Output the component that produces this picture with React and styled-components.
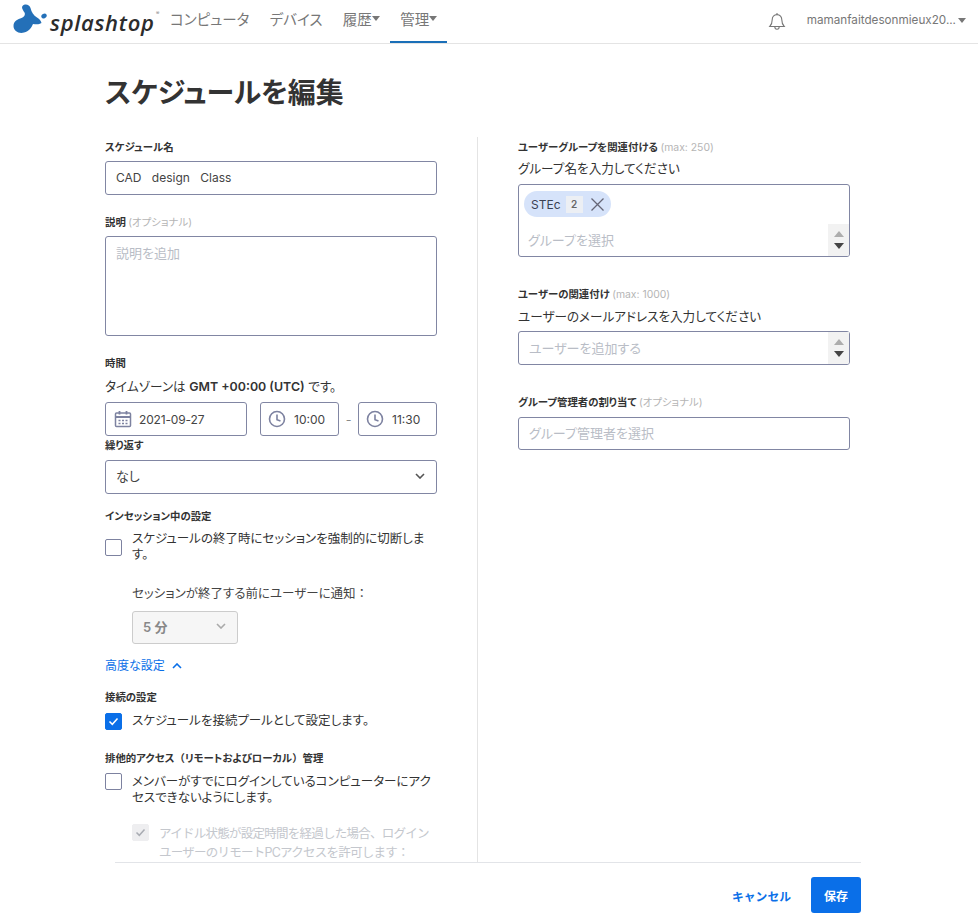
import React from 'react';
import styled, { createGlobalStyle } from 'styled-components';

const GlobalStyle = createGlobalStyle`
  html, body, #root { height: 100%; margin: 0; }
  body {
    background: #fff;
    color: #333;
    font-family: Inter, "Noto Sans CJK JP", sans-serif;
    font-size: 12.5px;
    font-feature-settings: "palt";
    overflow: hidden;
  }
  * { box-sizing: border-box; }
`;

const Page = styled.div`
  height: 917px;
  display: flex;
  flex-direction: column;
`;

const Header = styled.header`
  height: 44px;
  flex: none;
  display: flex;
  align-items: stretch;
  border-bottom: 1px solid #e4e4e4;
  padding-left: 13px;
`;

const Logo = styled.div`
  display: flex;
  align-items: center;
  width: 147px;
  flex: none;
  position: relative;
  svg { margin-bottom: 5px; }
`;

const Wordmark = styled.span`
  font-family: "Open Sans", sans-serif;
  font-style: italic;
  font-weight: 600;
  font-size: 22px;
  letter-spacing: 0.7px;
  color: #2c2c2c;
  margin-left: 3px;
  margin-top: 1px;
`;

const Reg = styled.span`
  position: absolute;
  left: 143px;
  top: 10px;
  font-size: 5px;
  color: #777;
`;

const Nav = styled.nav`
  display: flex;
  align-items: stretch;
  gap: 0.4px;
`;

const NavItem = styled.a`
  display: flex;
  align-items: center;
  padding: 0 10px 5px;
  font-size: 14.5px;
  color: #777;
  border-bottom: 2px solid ${p => (p.$active ? '#1a6fb8' : 'transparent')};
  height: 43px;
`;

const Caret = styled.span`
  display: inline-block;
  width: 0;
  height: 0;
  border-left: 4px solid transparent;
  border-right: 4px solid transparent;
  border-top: 5px solid #777;
`;

const HeaderRight = styled.div`
  margin-left: auto;
  display: flex;
  align-items: center;
  padding: 0 12px 3px 0;
  color: #777;
`;

const BellWrap = styled.span`
  display: flex;
  margin-top: 3px;
`;

const UserName = styled.span`
  font-size: 11.7px;
  margin-left: 20px;
  margin-right: 2px;
`;

const Main = styled.main`
  flex: 1;
  overflow: hidden;
  padding-left: 105px;
  min-height: 0;
`;

const Title = styled.h1`
  font-size: 28px;
  letter-spacing: -0.1px;
  line-height: 40px;
  font-weight: 700;
  color: #333;
  margin: 29px 0 24px;
`;

const Columns = styled.div`
  display: flex;
  align-items: stretch;
  height: 800px;
`;

const LeftCol = styled.div`
  width: 373px;
  padding-right: 40px;
  border-right: 1px solid #e4e4e4;
  flex: none;
`;

const RightCol = styled.div`
  width: 332px;
  margin-left: 40px;
  flex: none;
`;

const Label = styled.div`
  font-size: 10.4px;
  line-height: 14px;
  font-weight: 700;
  color: #333;
  padding-top: 1px;
  margin-bottom: -1px;
  margin-top: ${p => p.$top || 0}px;
`;

const Muted = styled.span`
  font-weight: 400;
  color: #b5b5b5;
`;

// full-width punctuation keeps its em box in the reference
const Wide = styled.span`
  display: inline-block;
  font-feature-settings: normal;
`;

const Hint = styled.div`
  font-size: 12.6px;
  line-height: 18px;
  color: #333;
  margin-top: ${p => p.$top || 0}px;
  strong { font-weight: 600; font-size: 12.4px; }
`;

const Field = styled.div`
  display: flex;
  align-items: center;
  height: ${p => p.$height || 34}px;
  width: ${p => (p.$width ? `${p.$width}px` : '100%')};
  border: 1px solid #8186a3;
  border-radius: 3px;
  padding: 0 10px 2px;
  font-size: 12px;
  color: #444;
  margin-top: ${p => p.$top || 0}px;
  margin-left: ${p => p.$left || 0}px;
  background: #fff;
  flex: none;
`;

const TextArea = styled(Field)`
  align-items: flex-start;
  padding-top: 6px;
`;

const Placeholder = styled.span`
  color: #b9bdc6;
  font-size: 13px;
`;

const NameText = styled.span`
  word-spacing: 7px;
`;

const TimeRow = styled.div`
  display: flex;
  align-items: center;
  margin-top: 6px;
`;

const DateField = styled(Field)`
  padding: 0 8px 0;
  gap: 7px;
  letter-spacing: -0.15px;
`;

const TimeField = styled(Field)`
  padding: 0 8px 0 7px;
  gap: 8px;
`;

const Dash = styled.span`
  width: 19px;
  text-align: center;
  color: #888;
`;

const SelectField = styled(Field)`
  justify-content: space-between;
  padding: 0 11px 3px 10px;
  font-size: 13px;
  ${p => p.$disabled && `
    background: #f6f6f6;
    border-color: #ccc;
    color: #888;
    font-weight: 600;
    margin-left: 27px;
  `}
`;

const CheckRow = styled.div`
  display: flex;
  align-items: flex-start;
  gap: 10px;
  margin-top: ${p => p.$top || 0}px;
  margin-left: ${p => p.$left || 0}px;
  line-height: ${p => p.$line || 16}px;
  color: #333;
  font-size: 12.5px;
`;

const FadedRow = styled(CheckRow)`
  color: #c4c7cd;
  font-feature-settings: normal;
  letter-spacing: -0.75px;
`;

const Box = styled.span`
  width: 17px;
  height: 17px;
  flex: none;
  display: flex;
  align-items: center;
  justify-content: center;
  border-radius: 2px;
  border: 1px solid ${p => (p.$on ? '#0a6fe8' : p.$faded ? '#eeeef0' : '#7d82a0')};
  background: ${p => (p.$on ? '#0a6fe8' : p.$faded ? '#eeeef0' : '#fff')};
  margin-top: ${p => p.$top || 0}px;
`;

const SubHint = styled.div`
  font-size: 12.5px;
  line-height: 18px;
  margin: 22px 0 0 27px;
  color: #444;
`;

const Advanced = styled.div`
  display: flex;
  align-items: center;
  gap: 7px;
  color: #0a6fe8;
  font-size: 12px;
  line-height: 18px;
  margin-top: 13px;
`;

const TagBox = styled.div`
  position: relative;
  height: 73px;
  margin-top: 6px;
  border: 1px solid #8186a3;
  border-radius: 3px;
  padding: 6px 5px;
`;

const Tag = styled.div`
  display: inline-flex;
  align-items: center;
  height: 26px;
  background: #d6e3fa;
  border-radius: 13px;
  padding: 0 6px 0 7px;
  font-size: 12px;
  color: #3a4152;
`;

const Count = styled.span`
  width: 17px;
  height: 17px;
  margin-left: 5px;
  margin-right: 7px;
  background: #eceff4;
  font-size: 10px;
  font-weight: 600;
  color: #666;
  display: flex;
  align-items: center;
  justify-content: center;
`;

const TagPlaceholder = styled.div`
  padding: 14px 0 0 4px;
  line-height: 18px;
`;

const Spinner = styled.span`
  position: absolute;
  right: 0;
  bottom: 0;
  width: 21px;
  height: 32px;
  background: #f2f2f2;
  border-bottom-right-radius: 2px;
  display: flex;
  flex-direction: column;
  align-items: center;
  justify-content: center;
  gap: 6px;
`;

const Arrow = styled.span`
  width: 0;
  height: 0;
  border-left: 5px solid transparent;
  border-right: 5px solid transparent;
  ${p => (p.$up ? 'border-bottom: 6px solid #adadad;' : 'border-top: 6px solid #444;')}
`;

const UserBox = styled(Field)`
  position: relative;
`;

const Footer = styled.footer`
  flex: none;
  height: 55px;
  margin-left: 115px;
  width: 746px;
  border-top: 1px solid #e2e4e8;
  display: flex;
  justify-content: flex-end;
  align-items: flex-start;
  padding-top: 14px;
  gap: 20px;
`;

const CancelButton = styled.button`
  border: none;
  background: none;
  color: #0a6fe8;
  font: 600 11.8px Inter, "Noto Sans CJK JP", sans-serif;
  height: 36px;
  padding: 0;
`;

const SaveButton = styled.button`
  border: none;
  background: #0a6fe8;
  color: #fff;
  font: 600 12px Inter, "Noto Sans CJK JP", sans-serif;
  width: 50px;
  height: 36px;
  border-radius: 3px;
  padding: 0;
`;

const SplashMark = () => (
  <svg width="34" height="30" viewBox="0 0 34 30">
    <path
      fill="#2470b8"
      d="M9.500 2C12 -.5 16.500 .5 17.500 4C18.500 8 20.500 11.500 24 13.500C26 14.500 28 16.500 28.500 19C25.500 21 22.500 20 20 20C18.500 23.500 16 27.500 11 28.500C6 30 .5 27 .5 22C.5 17 5 15 8.500 14C11.500 13 12.500 10.500 11.500 8.500C10.500 6.500 8 4 9.500 2Z"
    />
    <ellipse cx="31" cy="12" rx="2.800" ry="2.200" fill="#2470b8" transform="rotate(-30 31 12)" />
  </svg>
);

const Bell = () => (
  <svg width="20" height="20" viewBox="0 0 20 20" fill="none" stroke="#777" strokeWidth="1.1">
    <path d="M10 2.600c-3 0-4.800 2.300-4.800 5.200 0 3.500-.8 5-2.400 6.700h14.400c-1.600-1.700-2.400-3.200-2.400-6.700 0-2.900-1.800-5.200-4.800-5.200z" />
    <path d="M10 1v1.600M7.800 14.700c0 1.500 1 2.500 2.200 2.500s2.200-1 2.200-2.500" />
  </svg>
);

const Calendar = () => (
  <svg width="18" height="18" viewBox="0 0 18 18" fill="none" stroke="#7d82a0" strokeWidth="1.500">
    <rect x="1.500" y="3" width="15" height="13.500" rx="1" />
    <path d="M1.500 7h15M5.500 1v3.500M12.500 1v3.500" strokeWidth="1.800" />
    <path d="M4.500 10.500h2M8 10.500h2M11.500 10.500h2M4.500 13.500h2M8 13.500h2M11.500 13.500h2" />
  </svg>
);

const Clock = () => (
  <svg width="18" height="18" viewBox="0 0 18 18" fill="none" stroke="#7d82a0" strokeWidth="1.600">
    <circle cx="9" cy="9" r="7.500" />
    <path d="M9 4.500V9.800L12.500 11" />
  </svg>
);

const Chevron = ({ color = '#555', up }) => (
  <svg width="10" height="6" viewBox="0 0 10 6" fill="none" stroke={color} strokeWidth="1.600">
    <path d={up ? 'M1 5l4-4 4 4' : 'M1 1l4 4 4-4'} />
  </svg>
);

const Check = ({ color = '#fff' }) => (
  <svg width="11" height="9" viewBox="0 0 11 9" fill="none" stroke={color} strokeWidth="1.500">
    <path d="M1.500 4.500L4.300 7.300 9.500 1.500" />
  </svg>
);

const Cross = () => (
  <svg width="15" height="15" viewBox="0 0 15 15" fill="none" stroke="#667" strokeWidth="1.300">
    <path d="M1.500 1.500l12 12M13.500 1.500l-12 12" />
  </svg>
);

const App = () => (
  <Page>
    <GlobalStyle />
    <Header>
      <Logo>
        <SplashMark />
        <Wordmark>splashtop</Wordmark>
        <Reg>®</Reg>
      </Logo>
      <Nav>
        <NavItem>コンピュータ</NavItem>
        <NavItem>デバイス</NavItem>
        <NavItem>履歴<Caret /></NavItem>
        <NavItem $active>管理<Caret /></NavItem>
      </Nav>
      <HeaderRight>
        <BellWrap><Bell /></BellWrap>
        <UserName>mamanfaitdesonmieux20...</UserName>
        <Caret />
      </HeaderRight>
    </Header>
    <Main>
      <Title>スケジュールを編集</Title>
      <Columns>
        <LeftCol>
          <Label $top={3}>スケジュール名</Label>
          <Field $top={7}><NameText>CAD design Class</NameText></Field>
          <Label $top={20}>説明 <Muted>(オプショナル)</Muted></Label>
          <TextArea $height={100} $top={7}><Placeholder>説明を追加</Placeholder></TextArea>
          <Label $top={20}>時間</Label>
          <Hint $top={8}>タイムゾーンは <strong>GMT +00:00 (UTC)</strong> です。</Hint>
          <TimeRow>
            <DateField $width={142}><Calendar />2021-09-27</DateField>
            <TimeField $width={79} $left={13}><Clock />10:00</TimeField>
            <Dash>-</Dash>
            <TimeField $width={79}><Clock />11:30</TimeField>
          </TimeRow>
          <Label $top={2}>繰り返す</Label>
          <SelectField $top={8}>なし<Chevron /></SelectField>
          <Label $top={15}>インセッション中の設定</Label>
          <CheckRow $top={8}>
            <Box $top={8} />
            <span>スケジュールの終了時にセッションを強制的に切断します。</span>
          </CheckRow>
          <SubHint>セッションが終了する前にユーザーに通知<Wide>：</Wide></SubHint>
          <SelectField $disabled $width={106} $top={8} $height={33}>5 分<Chevron color="#aaa" /></SelectField>
          <Advanced>高度な設定 <Chevron color="#0a6fe8" up /></Advanced>
          <Label $top={15}>接続の設定</Label>
          <CheckRow $top={9}>
            <Box $on><Check /></Box>
            <span>スケジュールを接続プールとして設定します。</span>
          </CheckRow>
          <Label $top={21}>排他的アクセス<Wide>（</Wide>リモートおよびローカル<Wide>）</Wide>管理</Label>
          <CheckRow $top={9}>
            <Box $top={-1} />
            <span>メンバーがすでにログインしているコンピューターにアクセスできないようにします。</span>
          </CheckRow>
          <FadedRow $top={18} $left={27} $line={19}>
            <Box $faded><Check color="#a9acb3" /></Box>
            <span>アイドル状態が設定時間を経過した場合、ログインユーザーのリモートPCアクセスを許可します：</span>
          </FadedRow>
        </LeftCol>
        <RightCol>
          <Label $top={3}>ユーザーグループを関連付ける <Muted>(max: 250)</Muted></Label>
          <Hint $top={6}>グループ名を入力してください</Hint>
          <TagBox>
            <Tag>STEc<Count>2</Count><Cross /></Tag>
            <TagPlaceholder><Placeholder>グループを選択</Placeholder></TagPlaceholder>
            <Spinner><Arrow $up /><Arrow /></Spinner>
          </TagBox>
          <Label $top={30}>ユーザーの関連付け <Muted>(max: 1000)</Muted></Label>
          <Hint $top={7}>ユーザーのメールアドレスを入力してください</Hint>
          <UserBox $top={5}>
            <Placeholder>ユーザーを追加する</Placeholder>
            <Spinner><Arrow $up /><Arrow /></Spinner>
          </UserBox>
          <Label $top={30}>グループ管理者の割り当て <Muted>(オプショナル)</Muted></Label>
          <Field $top={8} $height={33}><Placeholder>グループ管理者を選択</Placeholder></Field>
        </RightCol>
      </Columns>
    </Main>
    <Footer>
      <CancelButton>キャンセル</CancelButton>
      <SaveButton>保存</SaveButton>
    </Footer>
  </Page>
);

export default App;
